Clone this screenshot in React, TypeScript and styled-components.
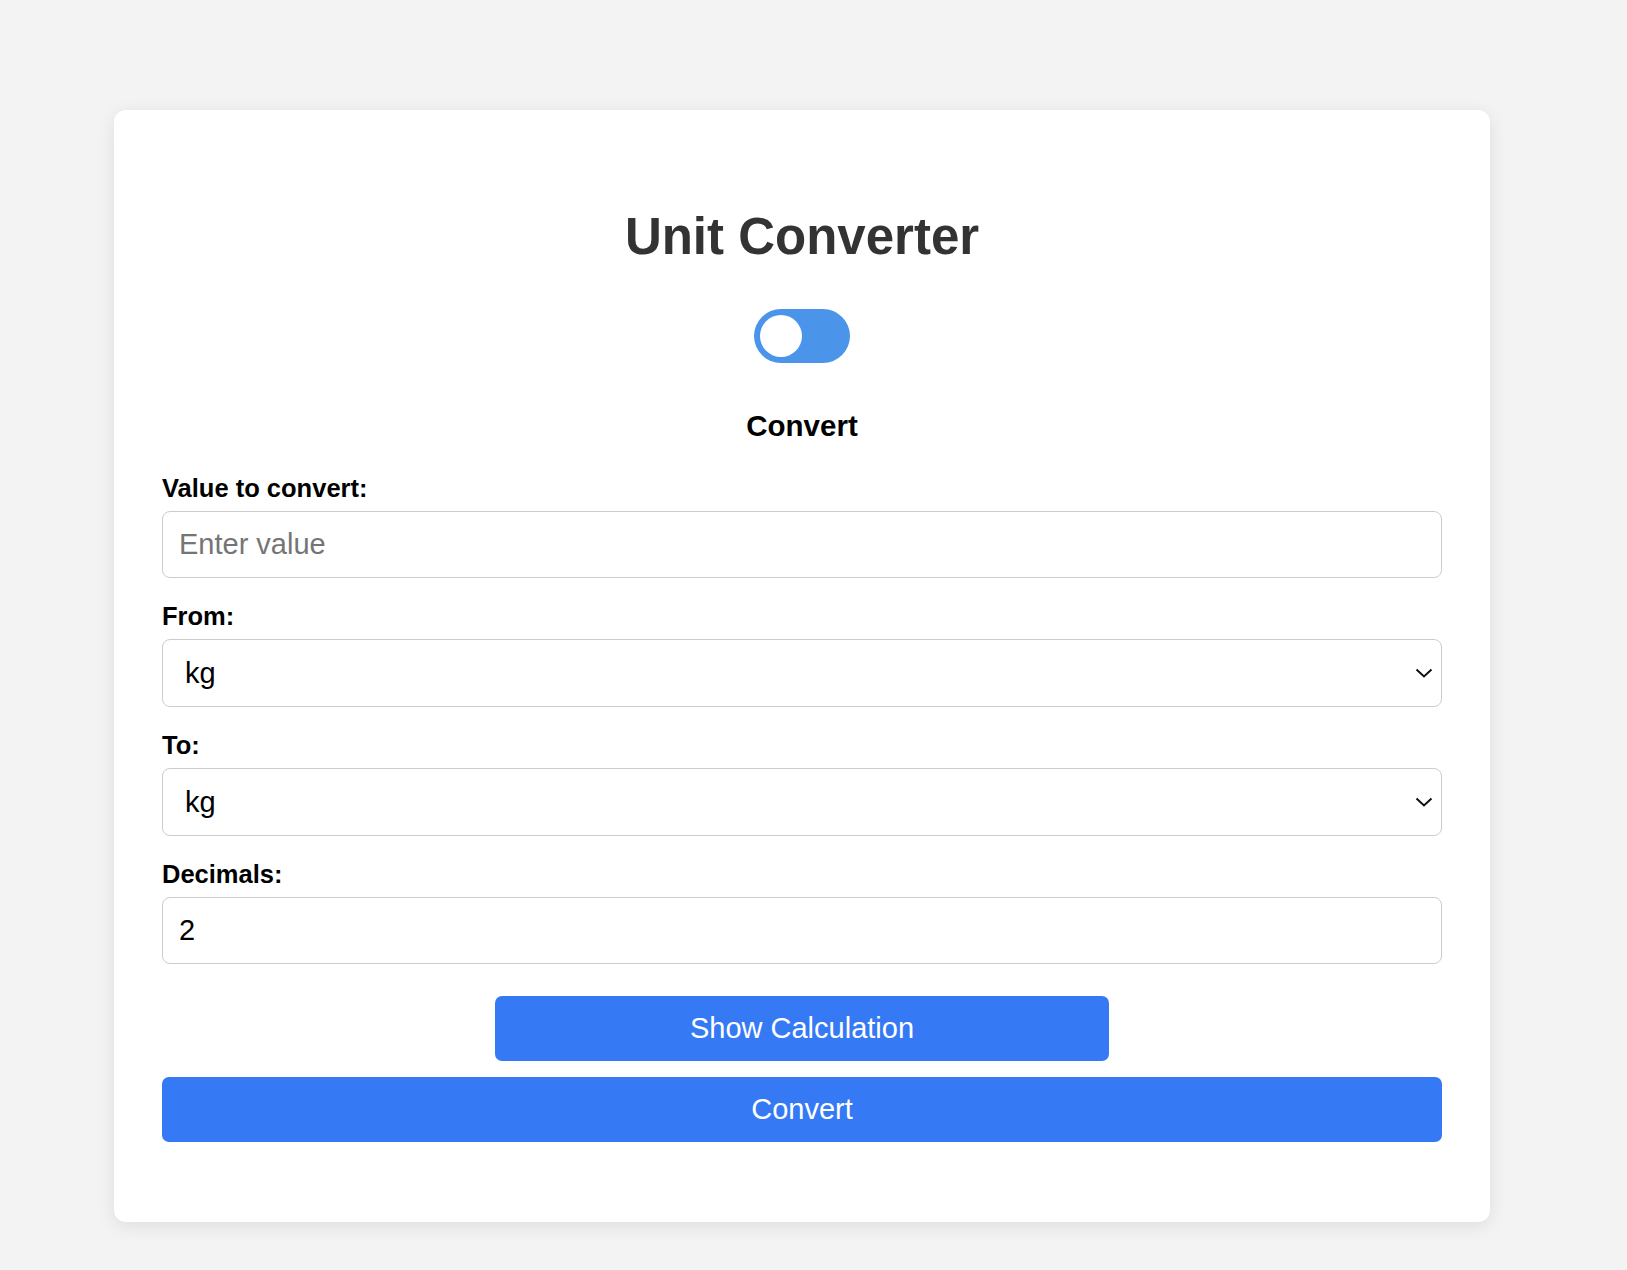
import React, { useState } from "react";
import styled, { createGlobalStyle } from "styled-components";

const GlobalStyle = createGlobalStyle`
  * { box-sizing: border-box; }
  html, body { margin: 0; padding: 0; }
  body {
    background: #f3f3f3;
    font-family: "Liberation Sans", Arial, sans-serif;
  }
`;

const Page = styled.div`
  min-height: 1270px;
  padding: 110px 0 0 114px;
`;

const Card = styled.div`
  width: 1376px;
  background: #ffffff;
  border-radius: 12px;
  box-shadow: 0 4px 18px rgba(0, 0, 0, 0.09);
  padding: 48px 48px 80px;
  display: flex;
  flex-direction: column;
`;

const Title = styled.h1`
  margin: 49px 0 42px;
  font-size: 51px;
  line-height: 60px;
  font-weight: 700;
  color: #333333;
  text-align: center;
`;

const ToggleRow = styled.div`
  display: flex;
  justify-content: center;
  margin-bottom: 46px;
`;

const ToggleTrack = styled.button<{ $on: boolean }>`
  width: 96px;
  height: 54px;
  border: none;
  padding: 6px;
  border-radius: 27px;
  background: #4a95ea;
  display: flex;
  justify-content: ${(p) => (p.$on ? "flex-end" : "flex-start")};
  cursor: pointer;
`;

const Knob = styled.span`
  width: 42px;
  height: 42px;
  border-radius: 50%;
  background: #ffffff;
`;

const Mode = styled.h2`
  margin: 0 0 31px;
  font-size: 29.5px;
  line-height: 34px;
  font-weight: 700;
  color: #000000;
  text-align: center;
`;

const Field = styled.div`
  display: flex;
  flex-direction: column;
  margin-bottom: 24px;
`;

const Label = styled.label`
  font-size: 25.5px;
  line-height: 28px;
  font-weight: 700;
  color: #000000;
  margin-bottom: 9px;
`;

const TextInput = styled.input`
  width: 100%;
  height: 67px;
  padding: 0 16px;
  border: 1px solid #cccccc;
  border-radius: 8px;
  font-family: "Liberation Sans", Arial, sans-serif;
  font-size: 29px;
  color: #000000;
  background: #ffffff;
  outline: none;
  &::placeholder { color: #757575; }
`;

const SelectWrap = styled.div`
  position: relative;
  width: 100%;
`;

const Select = styled.select`
  width: 100%;
  height: 68px;
  padding: 0 48px 0 22px;
  border: 1px solid #cccccc;
  border-radius: 8px;
  font-family: "Liberation Sans", Arial, sans-serif;
  font-size: 29px;
  color: #000000;
  background: #ffffff;
  outline: none;
  appearance: none;
  -webkit-appearance: none;
`;

const Chevron = styled.svg`
  position: absolute;
  right: 9px;
  top: 50%;
  width: 18px;
  height: 12px;
  margin-top: -6px;
  pointer-events: none;
`;

const Actions = styled.div`
  display: flex;
  flex-direction: column;
  align-items: center;
  gap: 16px;
  margin-top: 8px;
`;

const Button = styled.button<{ $wide?: boolean }>`
  width: ${(p) => (p.$wide ? "100%" : "48%")};
  height: 65px;
  border: none;
  border-radius: 7px;
  background: #3679f5;
  color: #ffffff;
  font-family: "Liberation Sans", Arial, sans-serif;
  font-size: 29px;
  cursor: pointer;
`;

const units = ["kg", "g", "lb", "oz"];

function UnitSelect() {
  return (
    <SelectWrap>
      <Select defaultValue="kg">
        {units.map((u) => (
          <option key={u}>{u}</option>
        ))}
      </Select>
      <Chevron viewBox="0 0 18 12" fill="none">
        <path d="M1.5 2.5 L9 9.5 L16.5 2.5" stroke="#111" strokeWidth="2" />
      </Chevron>
    </SelectWrap>
  );
}

export default function App() {
  const [on, setOn] = useState(false);
  return (
    <>
      <GlobalStyle />
      <Page>
        <Card>
          <Title>Unit Converter</Title>
          <ToggleRow>
            <ToggleTrack $on={on} onClick={() => setOn(!on)} aria-label="toggle">
              <Knob />
            </ToggleTrack>
          </ToggleRow>
          <Mode>Convert</Mode>
          <Field>
            <Label>Value to convert:</Label>
            <TextInput type="text" placeholder="Enter value" />
          </Field>
          <Field>
            <Label>From:</Label>
            <UnitSelect />
          </Field>
          <Field>
            <Label>To:</Label>
            <UnitSelect />
          </Field>
          <Field>
            <Label>Decimals:</Label>
            <TextInput type="number" defaultValue={2} />
          </Field>
          <Actions>
            <Button>Show Calculation</Button>
            <Button $wide>Convert</Button>
          </Actions>
        </Card>
      </Page>
    </>
  );
}
